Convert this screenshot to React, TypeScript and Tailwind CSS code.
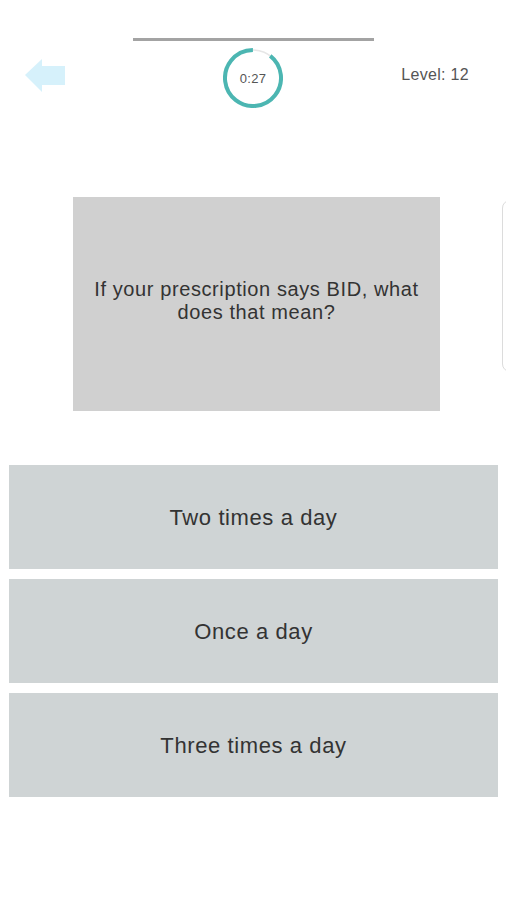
const answers = ['Two times a day', 'Once a day', 'Three times a day']

const BackArrow = () => (
  <svg width="42" height="36" viewBox="0 0 42 36">
    <polygon
      points="0,16 17,0 17,7 40,7 40,26 17,26 17,33"
      fill="#d6f1fb"
    />
  </svg>
)

const Timer = ({ label }: { label: string }) => (
  <div className="relative flex h-[60px] w-[60px] items-center justify-center">
    <svg width="60" height="60" viewBox="0 0 60 60" className="absolute inset-0">
      <circle cx="30" cy="30" r="28" fill="none" stroke="#e6e6e6" strokeWidth="1.5" />
      <circle
        cx="30"
        cy="30"
        r="28"
        fill="none"
        stroke="#4cb6b2"
        strokeWidth="4"
        strokeDasharray="157 176"
        transform="rotate(-52 30 30)"
      />
    </svg>
    <span className="relative mt-[2px] text-[13px] tracking-[0.3px] text-[#555]">{label}</span>
  </div>
)

const App = () => {
  return (
    <div className="h-[900px] w-[506px] overflow-hidden bg-white font-['Liberation_Sans',Arial,sans-serif]">
      <div className="pt-[38px]">
        <div className="mx-auto h-[3px] w-[241px] bg-[#a3a3a3]" />
      </div>

      <div className="mt-[7px] grid grid-cols-[1fr_auto_1fr]">
        <div className="pl-[25px] pt-[11px]">
          <BackArrow />
        </div>
        <Timer label="0:27" />
        <div className="flex justify-end pr-[37px] pt-[17px]">
          <span className="text-[16px] leading-[19px] tracking-[0.3px] text-[#555]">Level: 12</span>
        </div>
      </div>

      <div className="mt-[89px] flex items-start">
        <div className="ml-[73px] flex h-[214px] w-[367px] shrink-0 items-center justify-center bg-[#d0d0d0] px-[18px] pb-[6px]">
          <p className="text-center text-[20px] leading-[23px] tracking-[0.6px] text-[#333]">
            If your prescription says BID, what does that mean?
          </p>
        </div>
        <div className="ml-[62px] mt-[3px] h-[172px] w-[30px] shrink-0 rounded-lg border border-[#dcdcdc] bg-white" />
      </div>

      <div className="mt-[54px] flex flex-col gap-[10px] px-[9px]">
        {answers.map((answer, ai) => (
          <button
            key={`answer-${ai}`}
            className="flex h-[104px] w-[489px] items-center justify-center bg-[#cfd4d5] text-[22px] tracking-[0.6px] text-[#333]"
          >
            {answer}
          </button>
        ))}
      </div>
    </div>
  )
}

export default App
